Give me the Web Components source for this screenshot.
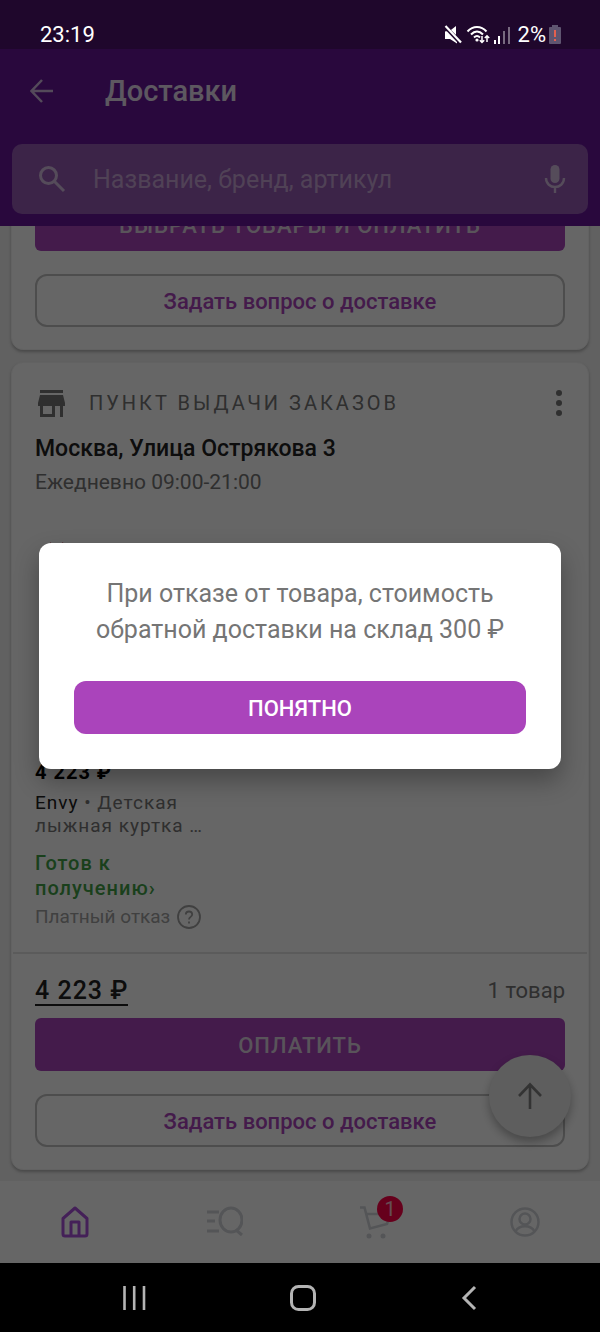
<!DOCTYPE html>
<html lang="ru">
<head>
<meta charset="utf-8">
<meta name="viewport" content="width=device-width, initial-scale=1">
<title>Доставки</title>
<style>
  html, body { margin: 0; height: 100%; }
  body {
    font-family: Roboto, "Noto Sans", sans-serif;
    font-size: 20px;
    color: #000;
    background: #000;
  }
</style>
</head>
<body>
<delivery-screen></delivery-screen>

<script>
const BASE = `
  *, *::before, *::after { box-sizing: border-box; }
  svg { display: block; flex: none; }
  button, input { font: inherit; color: inherit; margin: 0; }
  button { border: 0; padding: 0; background: none; cursor: pointer; }
  a { color: inherit; text-decoration: none; }
  h1, h2, p { margin: 0; font: inherit; }
`;

function define(name, html) {
  const template = document.createElement('template');
  template.innerHTML = html.replace('<style>', '<style>' + BASE);
  customElements.define(name, class extends HTMLElement {
    constructor() {
      super();
      this.attachShadow({ mode: 'open' }).append(template.content.cloneNode(true));
    }
  });
}

define('status-bar', `
  <style>
    :host {
      display: flex; align-items: center; justify-content: space-between;
      box-sizing: border-box; height: 49px; padding: 20px 39px 0 40px;
      background: #1f072c; color: #fff; font-size: 22px; line-height: 28px;
    }
    div { display: flex; align-items: center; gap: 3px; }
    .pct { padding-left: 4px; }
  </style>
  <time>23:19</time>
  <div>
    <svg width="20" height="20" viewBox="0 0 20 20" fill="#fff">
      <path d="M2 6.500H6L13 1V10L8.500 6L5 8Z"/>
      <path d="M2 6.500H6.500L14 13.500V18.500L7 14H2Z"/>
      <path d="M2.500 2L17.500 18" stroke="#1f072c" stroke-width="4"/>
      <path d="M2.500 1L18 17.500" stroke="#fff" stroke-width="2.200"/>
    </svg>
    <svg width="24" height="20" viewBox="0 0 24 20" fill="none" stroke="#fff" stroke-width="2">
      <path d="M1.500 6.500C7 0.500 15 0.500 20.500 6.500M5 9.500C8.800 5.500 13.200 5.500 17 9.500M8 12.500Q11 9.500 14 12.500"/>
      <circle cx="11" cy="15" r="1.600" fill="#fff" stroke="none"/>
      <path d="M16 11V17M13.800 15.200L16 17.500L18.200 15.200M21 17V11M18.800 13L21 10.800L23.200 13" stroke-width="1.500"/>
    </svg>
    <svg width="18" height="20" viewBox="0 0 18 20" fill="#fff">
      <rect x="1" y="15" width="2" height="4"/><rect x="5" y="11" width="2" height="8"/>
      <rect x="10" y="6" width="2" height="13" opacity=".4"/><rect x="15" y="2" width="2" height="17" opacity=".4"/>
    </svg>
    <span class="pct">2%</span>
    <svg width="12" height="20" viewBox="0 0 12 20">
      <path d="M3 0H9V2H11Q12 2 12 3V18Q12 19 11 19H1Q0 19 0 18V3Q0 2 1 2H3Z" fill="#5f5570"/>
      <path d="M5 5H7V12H5ZM5 14H7V16H5Z" fill="#e5604f"/>
    </svg>
  </div>
`);

define('app-header', `
  <style>
    :host { display: block; background: #66169a; color: #fff; padding: 0 12px 12px; }
    .bar { display: flex; align-items: center; height: 83px; padding: 0 18px; gap: 51px; }
    .bar svg { opacity: .7; }
    h1 { font-size: 29px; font-weight: 500; line-height: 36px; opacity: .85; }
    form {
      display: flex; align-items: center; height: 70px; margin-top: 12px; padding: 0 22px 0 26px;
      border-radius: 10px; background: #965ab4;
    }
    label, .mic { opacity: .6; }
    input {
      flex: 1; min-width: 0; height: 40px; padding: 0; margin-left: 27px;
      border: 0; outline: 0; background: none; font-size: 25px;
    }
    input::placeholder { color: #c8a5d7; opacity: 1; }
  </style>
  <div class="bar">
    <button aria-label="Назад">
      <svg width="24" height="24" viewBox="0 0 24 24" fill="none" stroke="#fff" stroke-width="2.500"><path d="M23 12H2M12 1L1.500 12L12 23"/></svg>
    </button>
    <h1>Доставки</h1>
  </div>
  <form role="search">
    <label for="q" aria-label="Поиск">
      <svg width="28" height="28" viewBox="0 0 28 28" fill="none" stroke="#fff" stroke-width="3"><circle cx="10.500" cy="10.500" r="8"/><path d="M16.500 16.500L26 26"/></svg>
    </label>
    <input id="q" type="text" placeholder="Название, бренд, артикул">
    <button class="mic" type="button" aria-label="Голосовой поиск">
      <svg width="22" height="30" viewBox="0 0 22 30"><rect x="6.500" y="1" width="9" height="18" rx="4.500" fill="#fff"/><path d="M2 14C2 26 20 26 20 14M11 22.500V29" fill="none" stroke="#fff" stroke-width="2.400"/></svg>
    </button>
  </form>
`);

define('wide-button', `
  <style>
    :host { display: block; }
    button {
      display: block; width: 100%; height: 53px; padding-top: 2px; border-radius: 6px;
      background: #aa44bb; color: #fff; font-size: 22px; font-weight: 500; line-height: 28px;
    }
    :host([kind="dim"]) button { color: #ded2e2; letter-spacing: 1px; }
    :host([kind="outline"]) button { border: 2px solid #c0c0c0; border-radius: 12px; background: none; color: #aa44bb; }
    :host([kind="dialog"]) button { border-radius: 12px; }
  </style>
  <button type="button"><slot></slot></button>
`);

define('delivery-card', `
  <style>
    :host {
      display: flex; flex-direction: column; flex: none;
      padding: 24px 23px 22px; border: 1px solid #f4f4f4; border-radius: 12px; background: #fff;
      box-shadow: 0 2px 3px rgba(0, 0, 0, .25);
    }
  </style>
  <slot></slot>
`);

define('pickup-point', `
  <style>
    :host { display: block; }
    header { display: flex; align-items: center; height: 32px; }
    .kind { flex: 1; margin-left: 22px; font-size: 20px; letter-spacing: 3px; line-height: 28px; color: #757575; }
    h2 { margin-top: 15px; font-size: 23px; font-weight: 500; line-height: 30px; color: #222; }
    p { margin-top: 4px; font-size: 21px; line-height: 28px; color: #757575; }
  </style>
  <header>
    <svg width="32" height="28" viewBox="0 0 32 28" fill="#757575"><path d="M5 1H28V4H5ZM5 6H28L30 14V17H28V28H25V17H20V28H5V17H3V14ZM8 17V25H17V17Z" fill-rule="evenodd"/></svg>
    <span class="kind">ПУНКТ ВЫДАЧИ ЗАКАЗОВ</span>
    <button aria-label="Ещё"><svg width="12" height="28" viewBox="0 0 12 28" fill="#757575"><circle cx="6" cy="4" r="3"/><circle cx="6" cy="14" r="3"/><circle cx="6" cy="24" r="3"/></svg></button>
  </header>
  <h2><slot name="address"></slot></h2>
  <p><slot name="hours"></slot></p>
`);

define('product-item', `
  <style>
    :host { display: block; width: 172px; }
    .photo { margin-top: 43px; }
    .price { margin-top: 5px; font-size: 20px; font-weight: 700; line-height: 24px; letter-spacing: 1px; }
    .name { margin-top: 7px; font-size: 19px; line-height: 23px; letter-spacing: 1px; color: #757575; white-space: nowrap; }
    .name b { font-weight: 400; color: #222; }
    .state { display: block; margin-top: 14px; font-size: 20px; font-weight: 500; line-height: 25px; letter-spacing: 1px; color: #43a047; }
    .fee { display: flex; align-items: center; gap: 7px; margin-top: 3px; font-size: 19px; line-height: 26px; color: #a0a0a0; white-space: nowrap; }
  </style>
  <svg class="photo" width="168" height="216" viewBox="0 0 168 216"><path d="M15 3L19 6L24 6L28 3L40 50V190H15Z" fill="#c86478"/></svg>
  <p class="price">4 223 ₽</p>
  <p class="name"><b>Envy</b><span> • Детская</span><br><span>лыжная куртка …</span></p>
  <a class="state" href="#status">Готов к<br>получению›</a>
  <div class="fee"><span>Платный отказ</span>
    <button aria-label="Подробнее"><svg width="24" height="24" viewBox="0 0 24 24" fill="none" stroke="#a0a0a0" stroke-width="1.800"><circle cx="12" cy="12" r="11"/><path d="M8.800 9.500C8.800 5.500 15.200 5.500 15.200 9.500C15.200 12 12 11.800 12 14.500M12 16.500V18.500"/></svg></button>
  </div>
`);

define('order-total', `
  <style>
    :host { display: flex; align-items: center; justify-content: space-between; box-sizing: border-box; height: 66px; margin: 22px -22px 0; padding: 10px 22px 0; border-top: 2px solid #e4e4e4; }
    a { border-bottom: 2px solid #222; font-size: 25px; font-weight: 500; line-height: 27px; letter-spacing: 1px; color: #222; }
    span { font-size: 22px; line-height: 28px; color: #757575; }
  </style>
  <a href="#total">4 223 ₽</a><span>1 товар</span>
`);

define('tab-bar', `
  <style>
    :host { display: block; background: #fff; }
    nav { display: grid; grid-template-columns: repeat(4, 1fr); height: 82px; }
    a { display: grid; place-items: center; position: relative; color: #d2d4da; }
    .on { color: #aa50dc; }
    b {
      position: absolute; top: 15px; left: calc(50% + 2px); width: 26px; height: 26px;
      border-radius: 50%; background: #ff0046; color: #fff; font-size: 20px; font-weight: 400; line-height: 27px; text-align: center;
    }
    b span { opacity: .75; }
  </style>
  <nav>
    <a class="on" href="#home" aria-label="Главная"><svg width="28" height="32" viewBox="0 0 28 32" fill="none" stroke="currentColor" stroke-width="3" stroke-linejoin="round"><path d="M2 12.500L14 2L26 12.500V28Q26 30 24 30H4Q2 30 2 28ZM10 30V16H18V30"/></svg></a>
    <a href="#catalog" aria-label="Каталог"><svg width="36" height="32" viewBox="0 0 36 32" fill="none" stroke="currentColor" stroke-width="3"><path d="M0 6H12M0 15H8M0 25H12M29 24L35 29"/><ellipse cx="24" cy="14" rx="11" ry="12"/></svg></a>
    <a href="#cart" aria-label="Корзина"><svg width="32" height="34" viewBox="0 0 32 34" fill="none" stroke="currentColor" stroke-width="2.600"><path d="M1 2.500H5.500L11 23.500L28 19L31 9H8"/><circle cx="10" cy="31" r="2.500" fill="currentColor" stroke="none"/><circle cx="24" cy="31" r="2.500" fill="currentColor" stroke="none"/></svg><b><span>1</span></b></a>
    <a href="#profile" aria-label="Профиль"><svg width="30" height="32" viewBox="0 0 30 32" fill="none" stroke="currentColor" stroke-width="2.500"><circle cx="15" cy="16" r="13.500"/><circle cx="15" cy="13" r="5.500"/><path d="M5.500 25.500C9 18.500 21 18.500 24.500 25.500"/></svg></a>
  </nav>
`);

define('notice-dialog', `
  <style>
    :host { position: absolute; inset: 0; display: flex; align-items: center; padding: 0 39px; background: rgba(0, 0, 0, .6); }
    section {
      width: 100%; padding: 33px 35px 35px; border-radius: 12px; background: #fff; text-align: center;
      box-shadow: 0 12px 24px rgba(0, 0, 0, .3);
    }
    p { margin-bottom: 33px; font-size: 25px; line-height: 36px; color: #757575; }
  </style>
  <section role="dialog" aria-modal="true">
    <p><slot></slot></p>
    <wide-button kind="dialog">ПОНЯТНО</wide-button>
  </section>
`);

define('system-nav', `
  <style>
    :host { display: flex; align-items: center; justify-content: space-between; height: 69px; padding: 0 121px; background: #000; color: #b4b4b4; }
  </style>
  <button aria-label="Недавние"><svg width="26" height="28" viewBox="0 0 26 28" fill="none" stroke="#b4b4b4" stroke-width="2.600"><path d="M3.500 2V26M13.200 2V26M23 2V26"/></svg></button>
  <button aria-label="Домой"><svg width="28" height="30" viewBox="0 0 28 30" fill="none" stroke="#b4b4b4" stroke-width="3"><rect x="2.500" y="3.500" width="23" height="23" rx="7"/></svg></button>
  <button aria-label="Назад"><svg width="20" height="28" viewBox="0 0 20 28" fill="none" stroke="#b4b4b4" stroke-width="3"><path d="M16 3L5 14L16 25"/></svg></button>
`);

define('delivery-screen', `
  <style>
    :host { display: flex; flex-direction: column; min-height: 100%; }
    .app { position: relative; flex: 1; display: flex; flex-direction: column; min-height: 0; }
    main {
      position: relative; flex: 1 1 0; min-height: 0; overflow: hidden;
      display: flex; flex-direction: column; justify-content: flex-end; gap: 12px;
      padding: 0 11px 11px; background: #f2f2f2;
    }
    .ask { margin-top: 23px; }
    .up {
      position: absolute; right: 29px; bottom: 44px; display: grid; place-items: center;
      width: 82px; height: 82px; border-radius: 50%; background: #eaeaea;
      box-shadow: 0 5px 10px rgba(0, 0, 0, .3);
    }
  </style>
  <status-bar></status-bar>
  <div class="app">
    <app-header></app-header>
    <main>
      <delivery-card>
        <wide-button kind="dim">ВЫБРАТЬ ТОВАРЫ И ОПЛАТИТЬ</wide-button>
        <wide-button class="ask" kind="outline">Задать вопрос о доставке</wide-button>
      </delivery-card>
      <delivery-card>
        <pickup-point>
          <span slot="address">Москва, Улица Острякова 3</span>
          <span slot="hours">Ежедневно 09:00-21:00</span>
        </pickup-point>
        <product-item></product-item>
        <order-total></order-total>
        <wide-button kind="dim">ОПЛАТИТЬ</wide-button>
        <wide-button class="ask" kind="outline">Задать вопрос о доставке</wide-button>
      </delivery-card>
      <button class="up" aria-label="Наверх"><svg width="24" height="28" viewBox="0 0 24 28" fill="none" stroke="#808080" stroke-width="2.600"><path d="M12 27V3M1 14L12 2.500L23 14"/></svg></button>
    </main>
    <tab-bar></tab-bar>
    <notice-dialog>При отказе от товара, стоимость обратной доставки на склад 300 ₽</notice-dialog>
  </div>
  <system-nav></system-nav>
`);
</script>
</body>
</html>
